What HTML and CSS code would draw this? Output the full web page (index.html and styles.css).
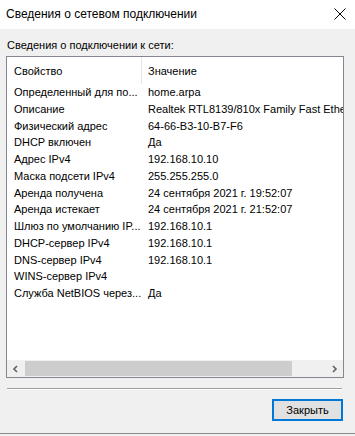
FILE: index.html
```html
<!DOCTYPE html>
<html lang="ru">
<head>
  <meta charset="UTF-8">
  <title>Сведения о сетевом подключении</title>
  <link rel="stylesheet" href="styles.css">
</head>
<body>
  <div class="window">
    <div class="titlebar">
      <span class="title">Сведения о сетевом подключении</span>
      <svg class="close" width="12" height="12" viewBox="0 0 12 12">
        <path d="M0.5 0.5 L11.5 11.5 M11.5 0.5 L0.5 11.5" stroke="#000" stroke-width="1" fill="none"/>
      </svg>
    </div>

    <div class="content">
      <div class="label">Сведения о подключении к сети:</div>

      <div class="listbox">
        <div class="list-header">
          <span class="col col-name">Свойство</span>
          <span class="col col-value">Значение</span>
        </div>
        <div class="list-body">
          <div class="row"><span class="col col-name">Определенный для по...</span><span class="col col-value">home.arpa</span></div>
          <div class="row"><span class="col col-name">Описание</span><span class="col col-value">Realtek RTL8139/810x Family Fast Ethernet NIC</span></div>
          <div class="row"><span class="col col-name">Физический адрес</span><span class="col col-value">64-66-B3-10-B7-F6</span></div>
          <div class="row"><span class="col col-name">DHCP включен</span><span class="col col-value">Да</span></div>
          <div class="row"><span class="col col-name">Адрес IPv4</span><span class="col col-value">192.168.10.10</span></div>
          <div class="row"><span class="col col-name">Маска подсети IPv4</span><span class="col col-value">255.255.255.0</span></div>
          <div class="row"><span class="col col-name">Аренда получена</span><span class="col col-value">24 сентября 2021 г. 19:52:07</span></div>
          <div class="row"><span class="col col-name">Аренда истекает</span><span class="col col-value">24 сентября 2021 г. 21:52:07</span></div>
          <div class="row"><span class="col col-name">Шлюз по умолчанию IP...</span><span class="col col-value">192.168.10.1</span></div>
          <div class="row"><span class="col col-name">DHCP-сервер IPv4</span><span class="col col-value">192.168.10.1</span></div>
          <div class="row"><span class="col col-name">DNS-сервер IPv4</span><span class="col col-value">192.168.10.1</span></div>
          <div class="row"><span class="col col-name">WINS-сервер IPv4</span><span class="col col-value"></span></div>
          <div class="row"><span class="col col-name">Служба NetBIOS через...</span><span class="col col-value">Да</span></div>
        </div>
        <div class="hscroll">
          <svg class="arrow" width="8" height="8" viewBox="0 0 8 8">
            <path d="M5.5 1 L2.5 4 L5.5 7" stroke="#606060" stroke-width="1.6" fill="none"/>
          </svg>
          <div class="track"><div class="thumb"></div></div>
          <svg class="arrow" width="8" height="8" viewBox="0 0 8 8">
            <path d="M2.5 1 L5.5 4 L2.5 7" stroke="#606060" stroke-width="1.6" fill="none"/>
          </svg>
        </div>
      </div>

      <div class="separator"></div>

      <div class="buttons">
        <button class="button">Закрыть</button>
      </div>
    </div>
  </div>
</body>
</html>
```

FILE: styles.css
```css
* {
  margin: 0;
  padding: 0;
  box-sizing: border-box;
}

body {
  font-family: 'Liberation Sans', Arial, sans-serif;
  font-size: 11px;
  color: #000;
  background: #f0f0f0;
  width: 355px;
  height: 436px;
  overflow: hidden;
}

.window {
  height: 434px;
  border-bottom: 1px solid #8a8a8a;
  background: #f0f0f0;
}

.titlebar {
  height: 29px;
  background: #fff;
  display: flex;
  align-items: center;
  justify-content: space-between;
  padding: 0 9px 2px 6px;
}

.title {
  font-size: 12px;
}

.content {
  padding: 8px 11px 0 6px;
}

.label {
  height: 19px;
  line-height: 16px;
  padding-left: 1px;
}

.listbox {
  height: 322px;
  border: 1px solid #828790;
  background: #fff;
  display: flex;
  flex-direction: column;
  overflow: hidden;
}

.list-header {
  height: 27px;
  display: flex;
  align-items: center;
  flex-shrink: 0;
}

.list-header .col-name {
  border-right: 1px solid #e5e5e5;
  height: 100%;
  display: flex;
  align-items: center;
}

.list-body {
  flex: 1;
}

.row {
  display: flex;
  height: 16.75px;
  line-height: 16.75px;
}

.col {
  white-space: nowrap;
  overflow: hidden;
}

.col-name {
  width: 135px;
  flex-shrink: 0;
  padding-left: 7px;
}

.col-value {
  flex: 1;
  padding-left: 6px;
}

.hscroll {
  height: 17px;
  flex-shrink: 0;
  display: flex;
  align-items: center;
  background: #f0f0f0;
}

.arrow {
  width: 17px;
  flex-shrink: 0;
}

.track {
  flex: 1;
  height: 100%;
  display: flex;
  align-items: center;
}

.thumb {
  width: 267px;
  height: 15px;
  margin-left: 1px;
  background: #cdcdcd;
}

.separator {
  margin: 10px 2px 0 1px;
  border-top: 1px solid #a0a0a0;
  border-bottom: 1px solid #fff;
}

.buttons {
  display: flex;
  justify-content: flex-end;
  padding-top: 9px;
  padding-right: 1px;
}

.button {
  width: 71px;
  height: 22px;
  font-family: inherit;
  font-size: 11px;
  color: #000;
  background: #e1e1e1;
  border: 2px solid #0078d7;
  cursor: pointer;
}
```
